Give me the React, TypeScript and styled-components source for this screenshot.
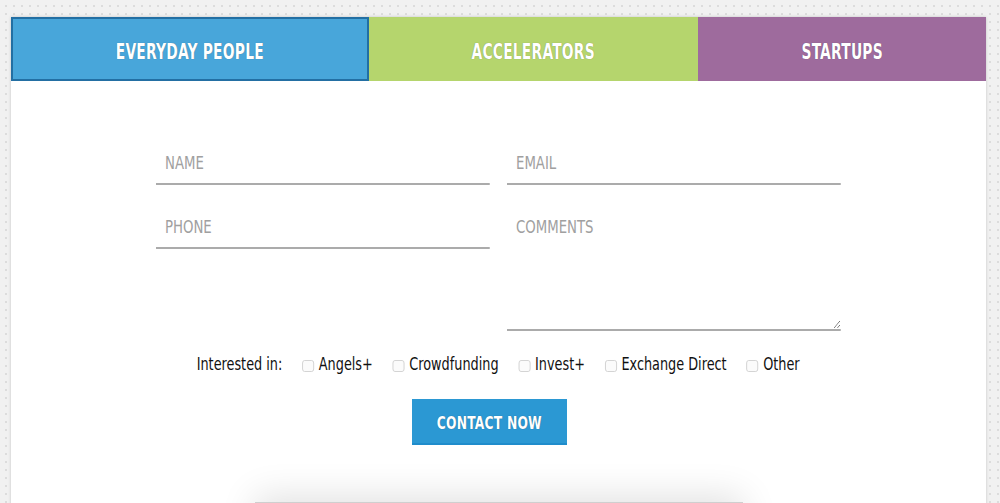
import React from "react";
import styled, { createGlobalStyle } from "styled-components";

const FONT = `"DejaVu Sans Condensed", "DejaVu Sans", sans-serif`;

const Global = createGlobalStyle`
  html, body { margin: 0; padding: 0; }
  body {
    background-color: #f1f1f1;
    background-image: radial-gradient(circle, #dcdcdc 1px, transparent 1.3px);
    background-size: 8px 8px;
    background-position: 2px 2px;
    font-family: ${FONT};
    overflow: hidden;
  }
`;

const Page = styled.div`
  padding: 17px 14px 0 11px;
  height: 503px;
  box-sizing: border-box;
  overflow: hidden;
`;

const Card = styled.div`
  background: #fff;
  height: 600px;
  box-shadow: 0 0 3px rgba(0, 0, 0, 0.18);
  display: flex;
  flex-direction: column;
  align-items: center;
`;

const Tabs = styled.div`
  display: grid;
  grid-template-columns: 358px 329px 1fr;
  width: 100%;
  height: 64px;
`;

const Tab = styled.div<{ $bg: string; $active?: boolean }>`
  background: ${(p) => p.$bg};
  display: flex;
  align-items: center;
  justify-content: center;
  box-sizing: border-box;
  border: ${(p) => (p.$active ? "2px solid #236fa3" : "none")};
  padding-top: 5px;
`;

/* The reference face is a tall condensed display font; squeeze the
   available condensed face horizontally to match its proportions. */
const Condensed = styled.span<{ $sx: number }>`
  display: inline-block;
  transform: scaleX(${(p) => p.$sx});
  transform-origin: center;
  white-space: nowrap;
`;

const TabLabel = styled(Condensed)`
  color: #fff;
  font-weight: 700;
  font-size: 22px;
  letter-spacing: 0.3px;
  text-shadow: 0 0 1px rgba(0, 0, 0, 0.4);
`;

const Form = styled.form`
  width: 685px;
  margin-top: 60px;
  display: grid;
  grid-template-columns: 334px 334px;
  column-gap: 17px;
  align-items: start;
`;

const Col = styled.div`
  display: flex;
  flex-direction: column;
  gap: 20px;
  overflow: visible;
`;

const SX = 0.82;

const fieldBase = `
  border: none;
  border-bottom: 2px solid #ababab;
  outline: none;
  background: transparent;
  font-family: ${FONT};
  font-size: 18px;
  color: #333;
  padding: 0 ${9 / SX}px;
  box-sizing: border-box;
  width: ${334 / SX}px;
  transform: scaleX(${SX});
  transform-origin: left center;
  &::placeholder { color: #a0a0a0; }
`;

const Input = styled.input`
  ${fieldBase}
  height: 44px;
`;

const TextArea = styled.textarea`
  ${fieldBase}
  height: 126px;
  padding-top: 11px;
  resize: vertical;
  display: block;
`;

const Interests = styled.div`
  display: flex;
  align-items: center;
  justify-content: center;
  margin-top: 22px;
  font-size: 18px;
  color: #111;
  gap: 25px;
  transform: scaleX(0.793);
  transform-origin: center;
  white-space: nowrap;
`;

const Option = styled.label`
  display: flex;
  align-items: center;
  gap: 6px;
`;

const Check = styled.input.attrs({ type: "checkbox" })`
  appearance: none;
  width: 15px;
  height: 12px;
  margin: 4px 0 0 0;
  border: 1px solid #cfcfcf;
  border-radius: 3px;
  background: #fbfbfb;
`;

const Button = styled.button`
  margin: 25px 18px 0 0;
  width: 155px;
  height: 46px;
  background: #2b98d3;
  border: none;
  border-bottom: 2px solid #1f8ccb;
  padding: 3px 0 0;
  display: flex;
  align-items: center;
  justify-content: center;
  cursor: pointer;
`;

const ButtonLabel = styled(Condensed)`
  color: #fff;
  font-family: ${FONT};
  font-weight: 700;
  font-size: 17.5px;
  letter-spacing: 0.3px;
  text-shadow: 0 0 1px rgba(0, 0, 0, 0.4);
`;

const Shelf = styled.div`
  margin-top: 57px;
  width: 488px;
  height: 60px;
  flex-shrink: 0;
  background: #fff;
  border-top: 1px solid #cfcfcf;
  box-shadow: 0 -6px 36px rgba(0, 0, 0, 0.12);
`;

const options = ["Angels+", "Crowdfunding", "Invest+", "Exchange Direct", "Other"];

export default function App() {
  return (
    <>
      <Global />
      <Page>
        <Card>
          <Tabs>
            <Tab $bg="#48a6da" $active>
              <TabLabel $sx={0.7}>EVERYDAY PEOPLE</TabLabel>
            </Tab>
            <Tab $bg="#b5d56d">
              <TabLabel $sx={0.7}>ACCELERATORS</TabLabel>
            </Tab>
            <Tab $bg="#9e6b9d">
              <TabLabel $sx={0.7}>STARTUPS</TabLabel>
            </Tab>
          </Tabs>
          <Form onSubmit={(e) => e.preventDefault()}>
            <Col>
              <Input placeholder="NAME" />
              <Input placeholder="PHONE" />
            </Col>
            <Col>
              <Input placeholder="EMAIL" />
              <TextArea placeholder="COMMENTS" />
            </Col>
          </Form>
          <Interests>
            <span>Interested in:</span>
            {options.map((o) => (
              <Option key={o}>
                <Check />
                {o}
              </Option>
            ))}
          </Interests>
          <Button type="button">
            <ButtonLabel $sx={0.78}>CONTACT NOW</ButtonLabel>
          </Button>
          <Shelf />
        </Card>
      </Page>
    </>
  );
}
